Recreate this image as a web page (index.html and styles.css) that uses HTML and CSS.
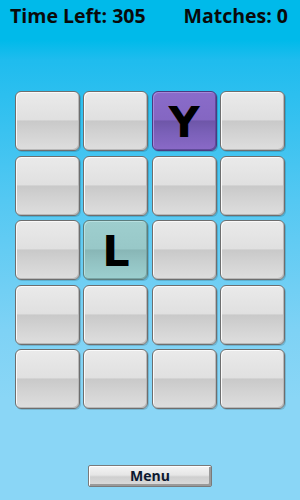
FILE: index.html
```html
<!DOCTYPE html>
<html>
<head>
<meta charset="utf-8">
<link rel="stylesheet" href="styles.css">
</head>
<body>
<div class="screen">
  <header class="status">
    <span class="stat">Time Left: 305</span>
    <span class="stat">Matches: 0</span>
  </header>
  <main class="board">
    <div class="tile"></div>
    <div class="tile"></div>
    <div class="tile tile-purple"><span class="letter">Y</span></div>
    <div class="tile"></div>
    <div class="tile"></div>
    <div class="tile"></div>
    <div class="tile"></div>
    <div class="tile"></div>
    <div class="tile"></div>
    <div class="tile tile-teal"><span class="letter">L</span></div>
    <div class="tile"></div>
    <div class="tile"></div>
    <div class="tile"></div>
    <div class="tile"></div>
    <div class="tile"></div>
    <div class="tile"></div>
    <div class="tile"></div>
    <div class="tile"></div>
    <div class="tile"></div>
    <div class="tile"></div>
  </main>
  <footer class="footer">
    <button class="menu-btn">Menu</button>
  </footer>
</div>
</body>
</html>
```
FILE: styles.css
```css
html, body {
  margin: 0;
  padding: 0;
}
body {
  width: 300px;
  height: 500px;
  overflow: hidden;
}
.screen {
  width: 300px;
  height: 500px;
  display: flex;
  flex-direction: column;
  background: linear-gradient(to bottom, #00baea 0px, #00baea 40px, #1fbcee 60px, #54c8f2 200px, #7ed2f5 330px, #8ad6f6 400px, #8ad6f6 500px);
  font-family: "Open Sans", "DejaVu Sans", sans-serif;
}
.status {
  height: 40px;
  display: flex;
  justify-content: space-between;
  align-items: flex-start;
  padding: 2px 12px 0 10px;
  box-sizing: border-box;
}
.stat {
  font-weight: 700;
  font-size: 19.5px;
  line-height: 28px;
  color: #0a0a0a;
}
.board {
  margin: 51px 15px 0 15px;
  display: grid;
  grid-template-columns: repeat(4, 65px);
  grid-template-rows: repeat(5, 60px);
  column-gap: 3.33px;
  row-gap: 4.5px;
}
.tile {
  box-sizing: border-box;
  border: 1px solid #6e6e6e;
  border-radius: 6px;
  background: linear-gradient(to bottom, #eaeaea 0%, #e0e0e0 48%, #c9c9c9 50%, #d2d2d2 70%, #dedede 100%);
  box-shadow: inset 1px 1px 0 #fafafa, inset -1px -1px 0 #b8b8b8, 1px 1px 0 rgba(0,0,0,0.15);
  display: flex;
  align-items: center;
  justify-content: center;
}
.tile-purple {
  border-color: #4a3a80;
  background: linear-gradient(to bottom, #8a6cca 0%, #8466c2 48%, #6e56a8 50%, #7a60b8 70%, #8a6ac8 100%);
  box-shadow: inset 1px 1px 0 #a48ada, inset -1px -1px 0 #604c9a, 1px 1px 0 rgba(0,0,0,0.15);
}
.tile-teal {
  border-color: #5c7c7c;
  background: linear-gradient(to bottom, #9ecece 0%, #98c8c8 48%, #88b6b6 50%, #92c2c2 70%, #9cd0d0 100%);
  box-shadow: inset 1px 1px 0 #b8e0e0, inset -1px -1px 0 #78a4a4, 1px 1px 0 rgba(0,0,0,0.15);
}
.letter {
  font-family: "DejaVu Sans", sans-serif;
  font-weight: 700;
  font-size: 43px;
  line-height: 1;
  color: #000;
  margin-top: 2px;
}
.footer {
  margin-top: auto;
  height: 35px;
  display: flex;
  justify-content: center;
  align-items: flex-start;
}
.menu-btn {
  width: 124px;
  height: 22px;
  box-sizing: border-box;
  border: 1px solid #7a7a7a;
  border-radius: 2px;
  background: linear-gradient(to bottom, #f4f4f4 0%, #e6e6e6 45%, #cfcfcf 55%, #dcdcdc 100%);
  box-shadow: inset 1px 1px 0 #ffffff, inset -2px -2px 0 #9a9a9a;
  font-family: "Open Sans", "DejaVu Sans", sans-serif;
  font-weight: 700;
  font-size: 14px;
  color: #0c1830;
  padding: 0;
  line-height: 20px;
}
```
